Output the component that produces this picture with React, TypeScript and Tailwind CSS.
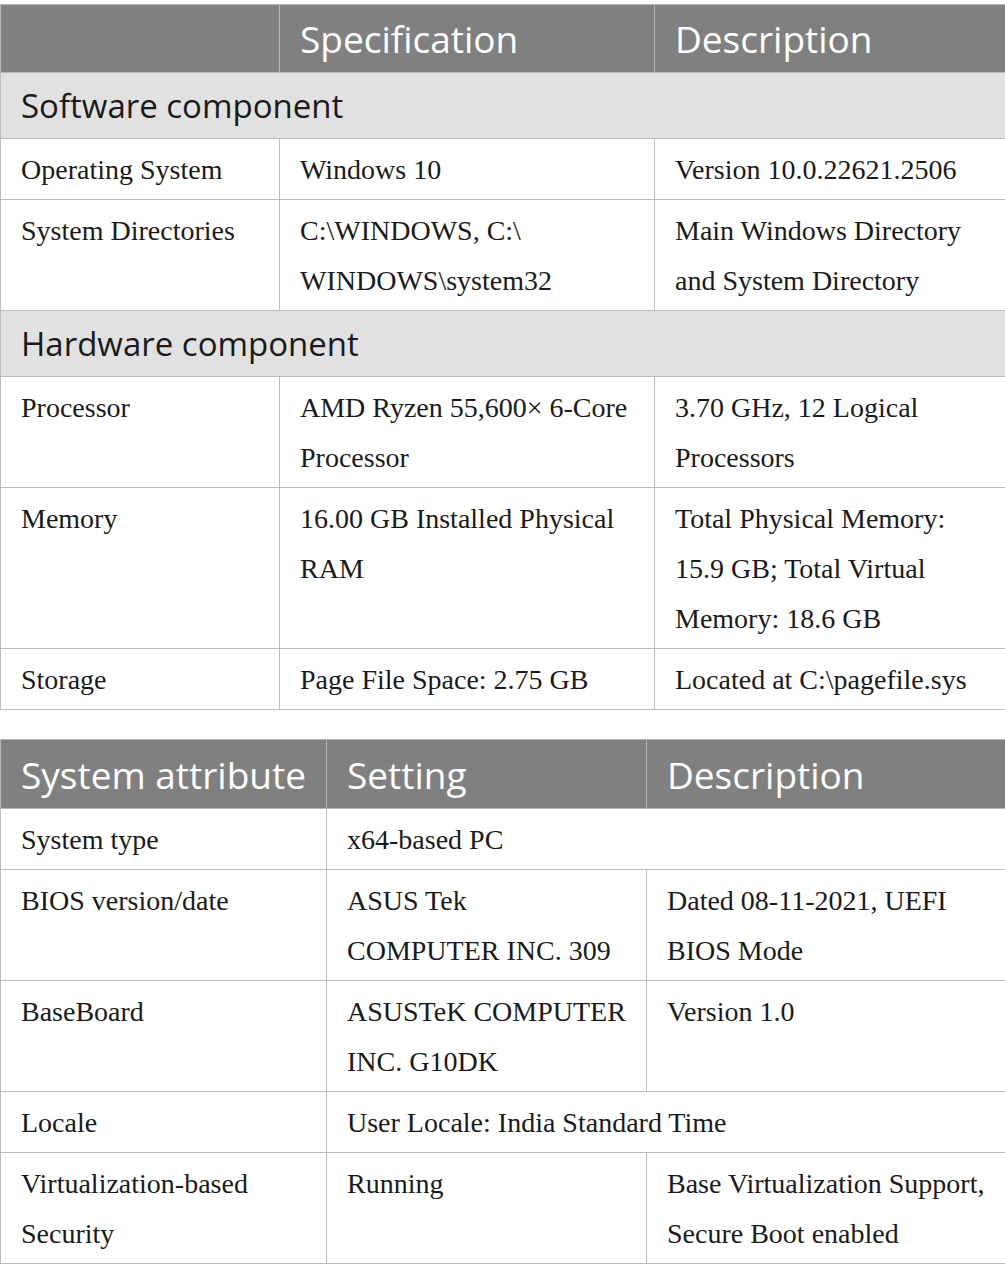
import React from 'react'

type Cell = { lines: string[]; span?: number }
type Row = { section?: string; cells?: Cell[] }

const serif = { fontFamily: '"Liberation Serif", "Times New Roman", serif' }
const sans = { fontFamily: '"Open Sans", "Noto Sans", sans-serif' }

const specRows: Row[] = [
  { section: 'Software component' },
  { cells: [{ lines: ['Operating System'] }, { lines: ['Windows 10'] }, { lines: ['Version 10.0.22621.2506'] }] },
  {
    cells: [
      { lines: ['System Directories'] },
      { lines: ['C:\\WINDOWS, C:\\', 'WINDOWS\\system32'] },
      { lines: ['Main Windows Directory', 'and System Directory'] },
    ],
  },
  { section: 'Hardware component' },
  {
    cells: [
      { lines: ['Processor'] },
      { lines: ['AMD Ryzen 55,600× 6-Core', 'Processor'] },
      { lines: ['3.70 GHz, 12 Logical', 'Processors'] },
    ],
  },
  {
    cells: [
      { lines: ['Memory'] },
      { lines: ['16.00 GB Installed Physical', 'RAM'] },
      { lines: ['Total Physical Memory:', '15.9 GB; Total Virtual', 'Memory: 18.6 GB'] },
    ],
  },
  { cells: [{ lines: ['Storage'] }, { lines: ['Page File Space: 2.75 GB'] }, { lines: ['Located at C:\\pagefile.sys'] }] },
]

const sysRows: Row[] = [
  { cells: [{ lines: ['System type'] }, { lines: ['x64-based PC'], span: 2 }] },
  {
    cells: [
      { lines: ['BIOS version/date'] },
      { lines: ['ASUS Tek', 'COMPUTER INC. 309'] },
      { lines: ['Dated 08-11-2021, UEFI', 'BIOS Mode'] },
    ],
  },
  {
    cells: [
      { lines: ['BaseBoard'] },
      { lines: ['ASUSTeK COMPUTER', 'INC. G10DK'] },
      { lines: ['Version 1.0'] },
    ],
  },
  { cells: [{ lines: ['Locale'] }, { lines: ['User Locale: India Standard Time'], span: 2 }] },
  {
    cells: [
      { lines: ['Virtualization-based', 'Security'] },
      { lines: ['Running'] },
      { lines: ['Base Virtualization Support,', 'Secure Boot enabled'] },
    ],
  },
]

function DataTable({ headers, widths, rows, tall }: { headers: string[]; widths: number[]; rows: Row[]; tall?: boolean }) {
  return (
    <table className="w-[1005px] table-fixed border-collapse">
      <colgroup>
        {widths.map((w, i) => (
          <col key={i} style={{ width: w }} />
        ))}
      </colgroup>
      <thead>
        <tr className={tall ? 'h-[69px] bg-[#808080]' : 'h-[68px] bg-[#808080]'}>
          {headers.map((h, i) => (
            <th
              key={i}
              className="whitespace-nowrap border border-[#b4b4b4] px-[20px] text-left align-middle text-[37px] font-normal leading-none text-white"
              style={sans}
            >
              {h}
            </th>
          ))}
        </tr>
      </thead>
      <tbody>
        {rows.map((r, ri) =>
          r.section ? (
            <tr key={ri} className="h-[66px] bg-[#e1e1e1]">
              <td
                colSpan={3}
                className="border border-[#bdbdbd] px-[20px] align-middle text-[33px] leading-none text-[#1a1a1a]"
                style={sans}
              >
                {r.section}
              </td>
            </tr>
          ) : (
            <tr key={ri}>
              {r.cells!.map((c, ci) => (
                <td
                  key={ci}
                  colSpan={c.span || 1}
                  className="border border-[#bdbdbd] px-[20px] pt-[6px] pb-[4px] align-top text-[28px] leading-[50px] text-[#1a1a1a]"
                  style={serif}
                >
                  {c.lines.map((l, li) => (
                    <div key={li} className="whitespace-nowrap">
                      {l}
                    </div>
                  ))}
                </td>
              ))}
            </tr>
          ),
        )}
      </tbody>
    </table>
  )
}

export default function App() {
  return (
    <div className="min-h-screen w-[1005px] bg-white pt-[4px]">
      <DataTable headers={['', 'Specification', 'Description']} widths={[279, 375, 351]} rows={specRows} />
      <div className="h-[29px]" />
      <DataTable headers={['System attribute', 'Setting', 'Description']} widths={[326, 320, 359]} rows={sysRows} tall />
    </div>
  )
}
